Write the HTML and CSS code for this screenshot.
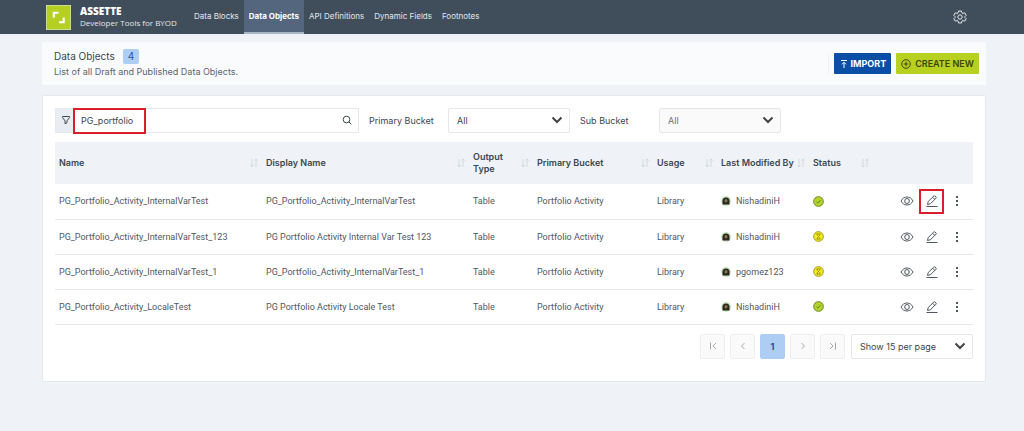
FILE: index.html
```html
<!DOCTYPE html>
<html lang="en">
<head>
    <meta charset="UTF-8">
    <meta name="viewport" content="width=device-width, initial-scale=1.0">
    <title>Data Objects</title>
    <link rel="stylesheet" href="styles.css">
</head>
<body>

    <!-- Icons -->
    <svg class="sprite" aria-hidden="true">
        <symbol id="icon-sort" viewBox="0 0 10 10">
            <path d="M3 1v8M1.3 7.3L3 9l1.7-1.7M7 9V1M5.3 2.7L7 1l1.700 1.700"/>
        </symbol>
        <symbol id="icon-eye" viewBox="0 0 14 14">
            <path d="M1 7c1.400-2.600 3.500-4 6-4s4.600 1.400 6 4c-1.400 2.600-3.500 4-6 4s-4.600-1.400-6-4z"/>
            <ellipse cx="7" cy="7" rx="2.300" ry="2.500"/>
        </symbol>
        <symbol id="icon-edit" viewBox="0 0 14 14">
            <path d="M2.500 10.500l.7-3L8.800 2q.6-.5 1.200 0l1 1q.5.600 0 1.200L5.500 9.700zM7.600 3.200l2.200 2.200M1.500 12.500h11"/>
        </symbol>
        <symbol id="icon-check" viewBox="0 0 12 12">
            <circle cx="6" cy="6" r="5.300"/>
            <path d="M3.800 6.200l1.600 1.500 2.900-3.300"/>
        </symbol>
        <symbol id="icon-draft" viewBox="0 0 12 12">
            <circle cx="6" cy="6" r="5.300"/>
            <path d="M3.800 3.200h4.400M3.800 8.800h4.400M4.500 3.200c0 1.400.5 2 1.500 2.800-1 .8-1.500 1.400-1.500 2.800M7.500 3.200c0 1.400-.5 2-1.500 2.800 1 .8 1.500 1.400 1.500 2.800"/>
        </symbol>
        <symbol id="icon-avatar" viewBox="0 0 10 10">
            <circle cx="5" cy="5" r="4.800" fill="#b9dfb0"/>
            <path d="M1.500 8.500V5a3.500 3.500 0 0 1 7 0v3.500z" fill="#2c2820"/>
            <ellipse cx="5" cy="4.800" rx="1.500" ry="1.800" fill="#8f7355"/>
        </symbol>
    </svg>

    <header class="navbar">
        <a class="brand" href="#">
            <svg class="logo" viewBox="0 0 24 24" aria-hidden="true">
                <rect width="24" height="24" fill="#b5cf23"/>
                <path d="M7.500 12V7.500H12M12.500 16.500h4.500V12" fill="none" stroke="#fff" stroke-width="2"/>
            </svg>
            <span class="brand-text">
                <strong>ASSETTE</strong>
                <span>Developer Tools for BYOD</span>
            </span>
        </a>
        <nav class="menu">
            <a href="#">Data Blocks</a>
            <a href="#" class="active">Data Objects</a>
            <a href="#">API Definitions</a>
            <a href="#">Dynamic Fields</a>
            <a href="#">Footnotes</a>
        </nav>
        <button class="settings" aria-label="Settings">
            <svg viewBox="0 0 14 14" aria-hidden="true">
                <path d="M5.600 1h2.800l.5 1.800 1.100.6 1.800-.5 1.400 2.400L11.900 6.600v.8l1.300 1.300-1.400 2.400-1.800-.5-1.100.6-.5 1.800H5.600l-.5-1.800-1.100-.6-1.800.5L.8 8.700l1.300-1.300v-.8L.8 5.300l1.400-2.400 1.800.5 1.100-.6z"/>
                <circle cx="7" cy="7" r="2.200"/>
            </svg>
        </button>
    </header>

    <main>
        <section class="page-header">
            <div>
                <h1>Data Objects <span class="count">4</span></h1>
                <p>List of all Draft and Published Data Objects.</p>
            </div>
            <div class="header-actions">
                <button class="btn btn-import">
                    <svg viewBox="0 0 10 10" aria-hidden="true"><path d="M2 1.500h6M5 9V3.500M3 5.300l2-2 2 2"/></svg>
                    IMPORT
                </button>
                <button class="btn btn-create">
                    <svg viewBox="0 0 10 10" aria-hidden="true"><circle cx="5" cy="5" r="4.300"/><path d="M5 2.700v4.600M2.700 5h4.600"/></svg>
                    CREATE NEW
                </button>
            </div>
        </section>

        <section class="card">
            <form class="filters">
                <div class="search">
                    <span class="filter-icon">
                        <svg viewBox="0 0 10 10" aria-hidden="true"><path d="M1.500 1.500h7v1L6 5.800v1.900L4 8.700V5.800L1.500 2.500z"/></svg>
                    </span>
                    <input type="text" value="PG_portfolio" aria-label="Search data objects">
                    <button type="button" aria-label="Search">
                        <svg viewBox="0 0 10 10" aria-hidden="true"><circle cx="4.500" cy="4.500" r="3.300"/><path d="M7 7l2.300 2.300"/></svg>
                    </button>
                    <span class="highlight"></span>
                </div>
                <label for="primary">Primary Bucket</label>
                <select id="primary"><option>All</option></select>
                <label for="sub">Sub Bucket</label>
                <select id="sub" disabled><option>All</option></select>
            </form>

            <table>
                <colgroup>
                    <col>
                    <col>
                    <col class="col-small">
                    <col class="col-bucket">
                    <col class="col-small">
                    <col class="col-user">
                    <col class="col-small">
                    <col class="col-actions">
                </colgroup>
                <thead>
                    <tr>
                        <th><div>Name <svg><use href="#icon-sort"/></svg></div></th>
                        <th><div>Display Name <svg><use href="#icon-sort"/></svg></div></th>
                        <th><div>Output Type <svg><use href="#icon-sort"/></svg></div></th>
                        <th><div>Primary Bucket <svg><use href="#icon-sort"/></svg></div></th>
                        <th><div>Usage <svg><use href="#icon-sort"/></svg></div></th>
                        <th><div>Last Modified By <svg><use href="#icon-sort"/></svg></div></th>
                        <th><div>Status <svg><use href="#icon-sort"/></svg></div></th>
                        <th></th>
                    </tr>
                </thead>
                <tbody>
                    <tr>
                        <td>PG_Portfolio_Activity_InternalVarTest</td>
                        <td>PG_Portfolio_Activity_InternalVarTest</td>
                        <td>Table</td>
                        <td>Portfolio Activity</td>
                        <td>Library</td>
                        <td><div class="user"><svg><use href="#icon-avatar"/></svg>NishadiniH</div></td>
                        <td><svg class="status published"><use href="#icon-check"/></svg></td>
                        <td>
                            <div class="row-actions">
                                <button aria-label="View"><svg><use href="#icon-eye"/></svg></button>
                                <button aria-label="Edit" class="marked"><svg><use href="#icon-edit"/></svg></button>
                                <button aria-label="More" class="more"></button>
                            </div>
                        </td>
                    </tr>
                    <tr>
                        <td>PG_Portfolio_Activity_InternalVarTest_123</td>
                        <td>PG Portfolio Activity Internal Var Test 123</td>
                        <td>Table</td>
                        <td>Portfolio Activity</td>
                        <td>Library</td>
                        <td><div class="user"><svg><use href="#icon-avatar"/></svg>NishadiniH</div></td>
                        <td><svg class="status draft"><use href="#icon-draft"/></svg></td>
                        <td>
                            <div class="row-actions">
                                <button aria-label="View"><svg><use href="#icon-eye"/></svg></button>
                                <button aria-label="Edit"><svg><use href="#icon-edit"/></svg></button>
                                <button aria-label="More" class="more"></button>
                            </div>
                        </td>
                    </tr>
                    <tr>
                        <td>PG_Portfolio_Activity_InternalVarTest_1</td>
                        <td>PG_Portfolio_Activity_InternalVarTest_1</td>
                        <td>Table</td>
                        <td>Portfolio Activity</td>
                        <td>Library</td>
                        <td><div class="user"><svg><use href="#icon-avatar"/></svg>pgomez123</div></td>
                        <td><svg class="status draft"><use href="#icon-draft"/></svg></td>
                        <td>
                            <div class="row-actions">
                                <button aria-label="View"><svg><use href="#icon-eye"/></svg></button>
                                <button aria-label="Edit"><svg><use href="#icon-edit"/></svg></button>
                                <button aria-label="More" class="more"></button>
                            </div>
                        </td>
                    </tr>
                    <tr>
                        <td>PG_Portfolio_Activity_LocaleTest</td>
                        <td>PG Portfolio Activity Locale Test</td>
                        <td>Table</td>
                        <td>Portfolio Activity</td>
                        <td>Library</td>
                        <td><div class="user"><svg><use href="#icon-avatar"/></svg>NishadiniH</div></td>
                        <td><svg class="status published"><use href="#icon-check"/></svg></td>
                        <td>
                            <div class="row-actions">
                                <button aria-label="View"><svg><use href="#icon-eye"/></svg></button>
                                <button aria-label="Edit"><svg><use href="#icon-edit"/></svg></button>
                                <button aria-label="More" class="more"></button>
                            </div>
                        </td>
                    </tr>
                </tbody>
            </table>

            <div class="pagination">
                <button disabled aria-label="First page"><svg viewBox="0 0 10 10"><path d="M2.500 1.500v7M8 2L5 5l3 3"/></svg></button>
                <button disabled aria-label="Previous page"><svg viewBox="0 0 10 10"><path d="M6.500 2l-3 3 3 3"/></svg></button>
                <button class="current">1</button>
                <button disabled aria-label="Next page"><svg viewBox="0 0 10 10"><path d="M3.500 2l3 3-3 3"/></svg></button>
                <button disabled aria-label="Last page"><svg viewBox="0 0 10 10"><path d="M7.500 1.500v7M2 2l3 3-3 3"/></svg></button>
                <select aria-label="Rows per page"><option>Show 15 per page</option></select>
            </div>
        </section>
    </main>

</body>
</html>
```
FILE: styles.css
```css
* {
    box-sizing: border-box;
}
body {
    font-family: Inter, "Liberation Sans", sans-serif;
    font-size: 9px;
    background-color: #eff3f7;
    color: #3c4650;
    margin: 0;
}
svg {
    flex: none;
    fill: none;
    stroke: currentColor;
}
button, input, select {
    font: inherit;
    color: inherit;
    margin: 0;
}
button {
    display: flex;
    align-items: center;
    justify-content: center;
    padding: 0;
    border: none;
    background: none;
    cursor: pointer;
}
.sprite {
    display: none;
}

/* Top bar */
.navbar {
    display: flex;
    align-items: stretch;
    height: 34px;
    padding: 0 57px 0 46px;
    background-color: #404d5b;
    color: #e4e8ec;
}
.navbar a {
    color: inherit;
    text-decoration: none;
}
.brand {
    display: flex;
    align-items: center;
    gap: 9px;
    width: 143px;
}
.logo {
    width: 25px;
    height: 25px;
}
.brand-text {
    display: flex;
    flex-direction: column;
    font-family: "Open Sans", sans-serif;
    font-size: 8px;
    line-height: 11px;
    white-space: nowrap;
}
.brand-text strong {
    font-size: 10px;
    font-weight: 800;
    color: #fff;
}
.menu {
    display: flex;
    font-size: 8px;
}
.menu a {
    display: flex;
    align-items: center;
    padding: 0 5px;
    border-bottom: 2px solid transparent;
}
.menu .active {
    background-color: #53667d;
    border-bottom-color: #a9b6c5;
    color: #fff;
    font-weight: 700;
}
.settings {
    margin-left: auto;
}
.settings svg {
    width: 14px;
    height: 14px;
}

main {
    padding: 8px 38px 50px 42px;
}

/* Page header */
.page-header {
    display: flex;
    justify-content: space-between;
    align-items: center;
    height: 43px;
    padding: 0 7px 0 12px;
    background-color: #fafbfc;
}
.page-header h1 {
    display: flex;
    align-items: center;
    gap: 8px;
    margin: 0;
    font-size: 10px;
    font-weight: 400;
    line-height: 15px;
}
.page-header p {
    margin: 0;
    line-height: 15px;
    color: #5c656e;
}
.count {
    padding: 0 5px;
    border-radius: 2px;
    background-color: #aecdf3;
    color: #1c57a8;
}
.header-actions {
    display: flex;
    gap: 5px;
    padding-left: 5px;
    border-left: 1px solid #eff1f4;
}
.btn {
    gap: 4px;
    height: 21px;
    padding: 0 5px;
    border-radius: 1px;
    font-weight: 600;
}
.btn svg {
    width: 10px;
    height: 10px;
}
.btn-import {
    gap: 2px;
    background-color: #0a4ea6;
    color: #fff;
    font-weight: 700;
}
.btn-create {
    background-color: #b8d01f;
    color: #3b4711;
}

/* Card */
.card {
    margin-top: 10px;
    padding: 12px 12px 22px;
    border: 1px solid #e3e8ed;
    border-radius: 2px;
    background-color: #fff;
}
.filters {
    display: flex;
    align-items: center;
    height: 24px;
    margin-bottom: 10px;
}
.search {
    position: relative;
    display: flex;
    flex: 1;
    max-width: 304px;
    height: 25px;
    margin-right: 10px;
    border: 1px solid #e6e9ed;
}
.search svg {
    width: 10px;
    height: 10px;
}
.filter-icon {
    display: flex;
    align-items: center;
    justify-content: center;
    width: 19px;
    background-color: #e9edf3;
}
.search input {
    flex: 1;
    min-width: 0;
    padding: 0 6px;
    border: none;
    outline: none;
    background: none;
}
.search button {
    width: 22px;
}
.highlight {
    position: absolute;
    top: -1px;
    left: 17px;
    width: 73px;
    height: 26px;
    border: 2px solid #d91f2c;
}
label {
    width: 79px;
}
select {
    appearance: none;
    width: 122px;
    height: 25px;
    margin-right: 10px;
    padding: 0 8px;
    border: 1px solid #e3e6ea;
    border-radius: 2px;
    background: #fff url("data:image/svg+xml,%3Csvg xmlns='http://www.w3.org/2000/svg' viewBox='0 0 12 8'%3E%3Cpath d='M1.500 1.500L6 6l4.500-4.500' fill='none' stroke='%23404448' stroke-width='2'/%3E%3C/svg%3E") no-repeat right 6px center / 12px 8px;
}
select:disabled {
    background-color: #fafafa;
    color: #6c7278;
    opacity: 1;
}

/* Table */
table {
    width: 100%;
    border-collapse: collapse;
    table-layout: fixed;
}
.col-small {
    width: 64px;
}
.col-bucket {
    width: 120px;
}
.col-user {
    width: 92px;
}
.col-actions {
    width: 100px;
}
th {
    height: 42px;
    padding: 0 3px 0 4px;
    background-color: #eff3f7;
    text-align: left;
    font-weight: 600;
    line-height: 12px;
}
th div {
    display: flex;
    align-items: center;
    justify-content: space-between;
}
th svg {
    width: 10px;
    height: 10px;
    color: #d3d8de;
}
td {
    height: 35px;
    padding: 0 4px;
    border-bottom: 1px solid #e3e6ea;
    color: #50575f;
    font-family: Roboto, "Liberation Sans", sans-serif;
    white-space: nowrap;
}
td svg {
    display: block;
}
.user {
    display: flex;
    align-items: center;
    gap: 5px;
}
.user svg {
    width: 10px;
    height: 10px;
    stroke: none;
}
.status {
    width: 11px;
    height: 11px;
    color: #66821f;
}
.published {
    fill: #b3d22c;
}
.draft {
    fill: #f4ea1c;
    color: #96961a;
}
.row-actions {
    display: flex;
    justify-content: flex-end;
}
.row-actions button {
    width: 25px;
    height: 25px;
}
.row-actions svg {
    width: 14px;
    height: 14px;
}
.row-actions .marked {
    border: 2px solid #d91f2c;
}
.more::before {
    content: "";
    width: 2px;
    height: 2px;
    background-color: currentColor;
    box-shadow: 0 -4px currentColor, 0 4px currentColor;
}

/* Pagination */
.pagination {
    display: flex;
    justify-content: flex-end;
    gap: 5px;
    margin-top: 9px;
}
.pagination button {
    width: 25px;
    height: 25px;
    border: 1px solid #eceef0;
    border-radius: 2px;
    background-color: #fafafa;
    color: #a4a9ae;
}
.pagination svg {
    width: 10px;
    height: 10px;
}
.pagination .current {
    border-color: #aecdf3;
    background-color: #aecdf3;
    color: #1c4f9c;
    font-weight: 700;
}
.pagination select {
    margin: 0 0 0 1px;
}
```
